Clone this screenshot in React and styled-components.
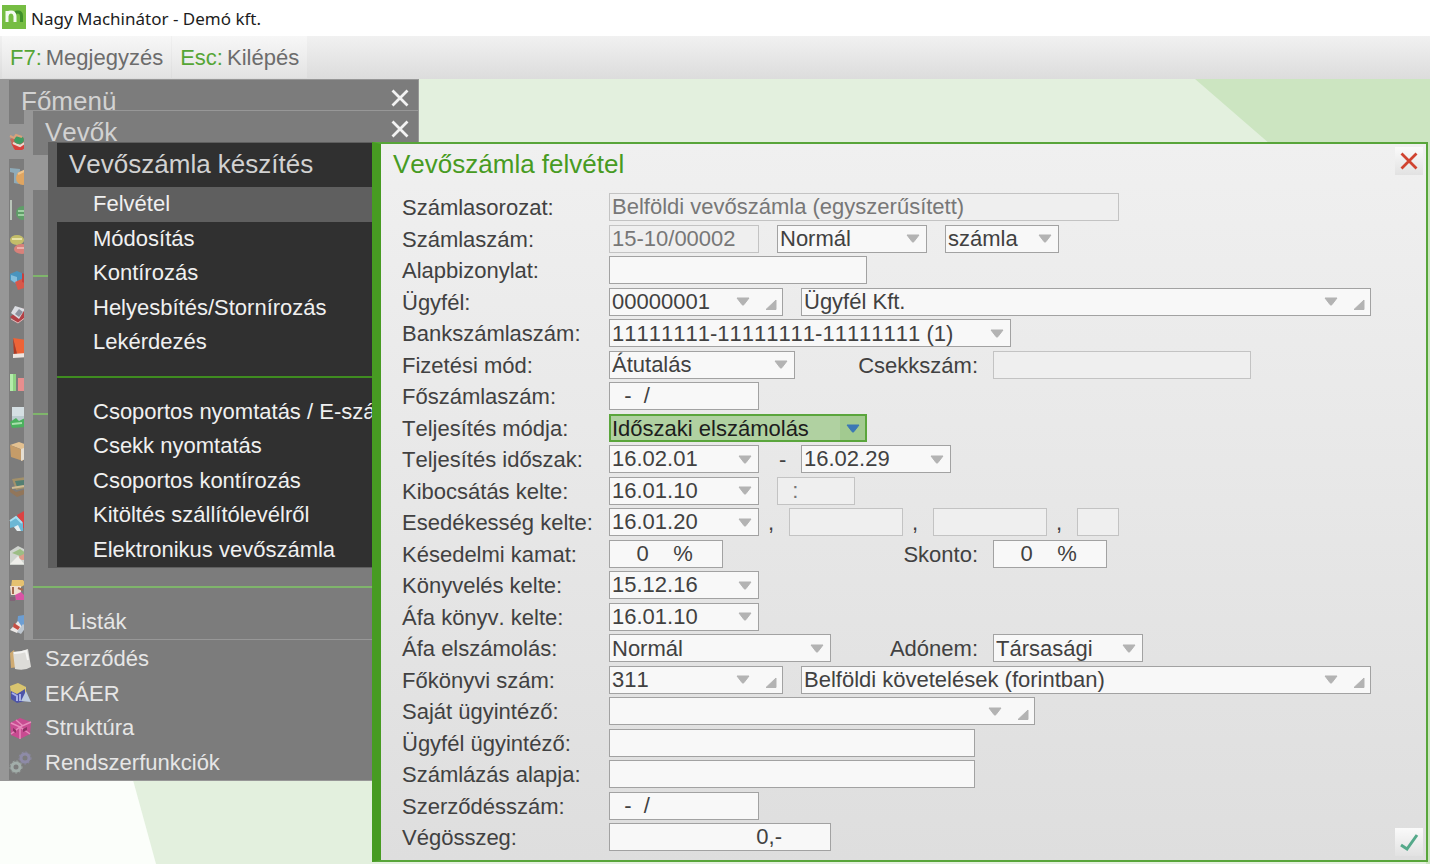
import { useId } from "react";
import styled, { createGlobalStyle, css } from "styled-components";

const GlobalStyle = createGlobalStyle`
  * {
    box-sizing: border-box;
  }

  body {
    margin: 0;
    background-color: #e3f0de;
    font-family: "Liberation Sans", Arial, sans-serif;
    font-size: 22px;
    font-kerning: none;
    color: #414141;
  }

  button, input, select {
    font: inherit;
    font-kerning: none;
    color: inherit;
    border-radius: 0;
  }
`;

const Screen = styled.div`
  min-height: 100vh;
  display: flex;
  flex-direction: column;
  overflow: hidden;
`;

const TitleBar = styled.header`
  display: flex;
  align-items: center;
  gap: 5px;
  height: 36px;
  padding-left: 2px;
  background-color: white;
  color: #1c1c1c;
  font-family: "Noto Sans", "Open Sans", sans-serif;
  font-size: 17px;

  svg {
    margin-bottom: 2px;
  }
`;

const Toolbar = styled.nav`
  display: flex;
  gap: 1px;
  height: 43px;
  padding: 0 2px 0 2px;
  background: linear-gradient(#f1f1f1, #dcdcdc);
`;

const ToolButton = styled.button`
  border: 0;
  height: 42px;
  padding: 2px 8px 0 8px;
  background: linear-gradient(#f7f7f7, #e3e3e3);
  color: #6c6c6c;
  display: flex;
  align-items: center;
  gap: 4px;

  span {
    color: #55a535;
  }
`;

const Desktop = styled.main`
  flex: 1;
  display: flex;
  position: relative;
`;

const Wallpaper = styled.svg`
  position: absolute;
  width: 100%;
  height: 100%;
`;

/* cascading menu windows, each one lies over the one before it */
const MenuWindow = styled.section`
  position: absolute;
  top: ${(props) => props.$top}px;
  left: ${(props) => props.$left}px;
  width: ${(props) => props.$width}px;
  border-style: solid;
  border-width: 1px 1px 1px 9px;
  border-color: ${(props) => (props.$dark ? "#5f5f5f" : "#979797")};
  background-color: ${(props) => (props.$dark ? "#303030" : "#7c7c7c")};
  color: ${(props) => (props.$dark ? "#f0f0f0" : "#e6e6e6")};
`;

const MenuHeader = styled.div`
  height: 44px;
  padding: 0 8px 0 12px;
  display: flex;
  justify-content: space-between;

  h2 {
    margin: 0;
    font-size: 26px;
    font-weight: 400;
    line-height: 42px;
    color: #d2d2d2;
  }
`;

const MenuClose = styled.button`
  border: 0;
  padding: 0;
  width: 20px;
  height: 36px;
  background: none;
  display: flex;
  align-items: center;
  justify-content: center;
`;

const MenuList = styled.ul`
  list-style: none;
  margin: 0;
  padding: 0;
  height: ${(props) => props.$height}px;
  display: grid;
  grid-auto-rows: 1fr;
`;

const MenuItem = styled.li`
  display: flex;
  align-items: center;

  ${(props) =>
    props.$active &&
    css`
      background-color: ${props.$dark ? "#5f5f5f" : "#979797"};
    `}
`;

const MenuLink = styled.a`
  flex: 1;
  display: flex;
  align-items: center;
  padding-left: ${(props) => props.$indent}px;
  color: inherit;
  text-decoration: none;
  white-space: nowrap;

  svg {
    width: 23px;
    height: 23px;
    margin-right: 13px;
  }
`;

const Divider = styled.hr`
  flex: 1;
  margin: 0;
  border: 0;
  height: 2px;
  background-color: ${(props) => (props.$dark ? "#3f8c20" : "#7fb56b")};
`;

const Dialog = styled.section`
  position: relative;
  flex: 1;
  margin: 63px 2px 2px 372px;
  display: flex;
  flex-direction: column;
  border: 2px solid #58a53a;
  border-left: 9px solid #479b22;
  background: linear-gradient(#f0f0f0, #dedede);
`;

const DialogHeader = styled.div`
  height: 49px;
  padding: 3px 3px 0 12px;
  display: flex;
  justify-content: space-between;
  align-items: flex-start;

  h1 {
    margin: 0;
    font-size: 26px;
    font-weight: 400;
    line-height: 34px;
    color: #479b22;
  }
`;

const DialogBody = styled.form`
  flex: 1;
  display: flex;
  align-items: stretch;
  padding: 0 3px 4px 21px;
`;

const Rows = styled.div`
  flex: 1;
  display: flex;
  flex-direction: column;
  justify-content: space-between;
  gap: 3px;
  padding-bottom: 5px;
`;

const Row = styled.div`
  display: flex;
  align-items: center;
  height: 28px;
`;

const Label = styled.label`
  width: 207px;
  padding-top: 2px;
  white-space: nowrap;
`;

const SideLabel = styled.label`
  width: ${(props) => props.$width}px;
  padding: 2px 15px 0 0;
  text-align: right;
`;

const Gap = styled.span`
  width: 18px;
`;

const Comma = styled.span`
  width: 30px;
  padding: 2px 0 0 9px;
`;

const Dash = styled.span`
  width: 42px;
  padding: 2px 0 0 20px;
`;

const SquareButton = styled.button`
  width: 28px;
  height: 28px;
  padding: 0;
  border: 0;
  display: flex;
  align-items: center;
  justify-content: center;
  background: linear-gradient(#fafafa, #e2e2e2);
  align-self: ${(props) => (props.$bottom ? "flex-end" : "flex-start")};
`;

const Box = styled.span`
  display: grid;
  grid-template-columns: 1fr auto;
  width: ${(props) => props.$width}px;
  height: 28px;
  border: 1px solid #a2a2a2;
  background-color: #f8f8f8;

  ${(props) =>
    props.$disabled &&
    css`
      border-color: #c3c3c3;
      background-color: #efefef;
      color: #777777;
    `}

  ${(props) =>
    props.$focused &&
    css`
      border: 2px solid #5aa53c;
      background: linear-gradient(to left, #a2ca90 25px, #b0d1a1 25px);
      color: #1d1d1d;
    `}
`;

const control = css`
  grid-row: 1;
  grid-column: 1 / 3;
  min-width: 0;
  width: 100%;
  border: 0;
  outline: 0;
  background: none;
  appearance: none;
`;

const Input = styled.input`
  ${control}
  padding: 0 ${(props) => props.$padEnd || 2}px 0 2px;
  text-align: ${(props) => (props.$padEnd ? "right" : "left")};
`;

const Select = styled.select`
  ${control}
  padding: 0 ${(props) => (props.$focused ? 1 : 2)}px;
  opacity: 1;
`;

const Marks = styled.span`
  grid-row: 1;
  grid-column: 2;
  display: flex;
  align-items: center;
  padding-right: ${(props) => (props.$tight ? 5 : 6)}px;
  pointer-events: none;
`;

const Corner = styled.svg`
  margin: 6px 0 0 15px;
`;

const Arrow = ({ color = "#b3b3b3" }) => (
  <svg width="14" height="9" viewBox="0 0 14 9">
    <path
      d="M1 1h12L7.900 7.700q-.9.900-1.800 0z"
      fill={color}
      stroke={color}
      strokeLinejoin="round"
    />
  </svg>
);

const Cross = ({ color, size }) => (
  <svg width={size} height={size} viewBox="0 0 18 18">
    <path d="M1.500 1.500l15 15M16.500 1.500l-15 15" stroke={color} strokeWidth="2.800" />
  </svg>
);

const TextField = ({ width, value = "", disabled, padEnd, id, label }) => (
  <Box $width={width} $disabled={disabled}>
    <Input
      id={id}
      aria-label={label}
      defaultValue={value}
      disabled={disabled}
      $padEnd={padEnd}
    />
  </Box>
);

const PickField = ({ width, value = "", corner, id, label }) => (
  <Box $width={width}>
    <Input id={id} aria-label={label} defaultValue={value} />
    <Marks $tight={corner}>
      <Arrow />
      {corner && (
        <Corner width="12" height="11" viewBox="0 0 12 11">
          <path d="M1 10.500L11 1v9.500z" fill="#b3b3b3" stroke="#b3b3b3" strokeLinejoin="round" />
        </Corner>
      )}
    </Marks>
  </Box>
);

const SelectField = ({ width, value, focused, id, label }) => (
  <Box $width={width} $focused={focused}>
    <Select id={id} aria-label={label} $focused={focused}>
      <option>{value}</option>
    </Select>
    <Marks $tight={focused}>
      <Arrow color={focused ? "#3b78b5" : undefined} />
    </Marks>
  </Box>
);

const FormRow = ({ label, children }) => {
  const id = useId();
  return (
    <Row>
      <Label htmlFor={id}>{label}</Label>
      {children(id)}
    </Row>
  );
};

const icons = [
  <>
    <path d="M1 9l9-3 12 5-8 8H5z" fill="#c26a5c" />
    <path d="M2 13l8 4 12-7v4l-9 6H6z" fill="#d8403c" />
    <path d="M4 13l7 3 9-6" stroke="#eadbd3" strokeWidth="2" fill="none" />
    <ellipse cx="10" cy="10" rx="5" ry="4" fill="#3f9c63" />
    <path d="M1 6l4 2 2-3 6 2" stroke="#d9a27c" strokeWidth="2" fill="none" />
  </>,
  <>
    <path d="M1 4l10 1-1 15-5-1V9L1 8z" fill="#8eabb9" />
    <circle cx="14" cy="14" r="7" fill="#dfa561" />
    <path d="M9 10l6-3 5 3" stroke="#f0c48a" strokeWidth="2" fill="none" />
  </>,
  <>
    <path d="M2 1v20" stroke="#b9c4b9" strokeWidth="2" />
    <circle cx="14" cy="14" r="7" fill="#5f9e68" />
    <path d="M9 12h9M9 16h9" stroke="#9ed0a2" strokeWidth="2" />
  </>,
  <>
    <ellipse cx="8" cy="7" rx="7" ry="5" fill="#c3bd69" />
    <path d="M3 6h10" stroke="#e8e2a5" strokeWidth="2" />
    <ellipse cx="13" cy="16" rx="8" ry="5" fill="#d8817a" />
    <path d="M8 15h10" stroke="#edb0aa" strokeWidth="2" />
  </>,
  <>
    <path d="M1 6l7-3 7 3v8l-8 2-6-4z" fill="#4a94bd" />
    <path d="M2 7l6 2v7l-6-4z" fill="#85bedb" />
    <path d="M6 14l9-4v10l-6 2z" fill="#d8584a" />
    <path d="M13 5l8 3v9l-8-3z" fill="#c83f3b" />
  </>,
  <>
    <path d="M1 15l12-9 9 5-13 10z" fill="#b34045" />
    <path d="M2 11l4-7 10 3-6 10z" fill="#dbdde2" />
    <path d="M6 12l4-5 4 3-4 5z" fill="#8d929e" />
    <path d="M2 17l7 4 12-9" stroke="#e7b4b6" fill="none" />
  </>,
  <>
    <path d="M4 1l14 2v14H8z" fill="#ee6337" />
    <path d="M4 1l4 16-3 1z" fill="#b23921" />
    <path d="M4 17l13-1 3 4-16 1z" fill="#eee6e2" />
  </>,
  <>
    <path d="M1 3h6v17H1z" fill="#8ed283" />
    <path d="M1 3h3v17H1z" fill="#b3ecaa" />
    <path d="M9 7h6v13H9z" fill="#e78e8e" />
    <path d="M18 4h4v16h-4z" fill="#83b7df" />
  </>,
  <>
    <path d="M3 1h16v20H3z" fill="#bccbd0" />
    <path d="M3 1h16v9H3z" fill="#d5dfe3" />
    <path d="M1 16l6-4 3 3 6-3v9l-13 1z" fill="#4bb15e" />
    <path d="M3 18l10-1" stroke="#a8e0ac" strokeWidth="2" />
  </>,
  <>
    <path d="M1 5l9-3 11 4-7 4z" fill="#e3c191" />
    <path d="M1 5l13 5v11L2 17z" fill="#c59c69" />
    <path d="M12 9l9-3v11l-9 4z" fill="#e5ded2" />
  </>,
  <>
    <path d="M3 4l14-2 4 10-14 3z" fill="#a3916a" />
    <path d="M6 6l9-1 2 5-9 2z" fill="#547f73" />
    <path d="M1 13l6 4 14-4v4l-13 5-7-5z" fill="#92765a" />
    <path d="M3 13l12-2" stroke="#d0bc93" strokeWidth="2" />
  </>,
  <>
    <path d="M8 5l7-4 7 5v10l-8 2z" fill="#db4343" />
    <path d="M1 11l6-5 7 7v8H9l-4-4-4 1z" fill="#6bb7d5" />
    <path d="M5 17l4-2 3 6H8z" fill="#e7eff2" />
    <path d="M1 11l6-4 6 6" stroke="#aadef0" strokeWidth="2" fill="none" />
  </>,
  <>
    <path d="M1 7l8-5 12 6v13H1z" fill="#cfd3ce" />
    <path d="M1 20l8-8 6 8z" fill="#eeeeea" />
    <circle cx="14" cy="12" r="4" fill="#dd9b8a" />
    <path d="M3 9l8-4 6 4-6 3z" fill="#9cbd84" />
  </>,
  <>
    <path d="M3 1h11l3 4-5 3H2z" fill="#e5c170" />
    <path d="M1 7h11v9H2z" fill="#f0dfd0" />
    <path d="M4 8v7M9 9l5 2" stroke="#a5694f" strokeWidth="2" fill="none" />
    <path d="M6 16l6-3 8 8H7z" fill="#d954a5" />
    <path d="M1 18h5v4H1z" fill="#816477" />
  </>,
  <>
    <path d="M9 3l6-1 6 6-6 9-7-4z" fill="#6c9ed3" />
    <path d="M1 17l8-9 4 6-5 6z" fill="#ebe8e6" />
    <path d="M5 10l6 4-2 3-5-3z" fill="#c64e43" />
    <path d="M8 19l6-8 3 3-5 7z" fill="#bec7d0" />
  </>,
  <>
    <path d="M1 5l4-3 4 17-7 1z" fill="#cfab72" />
    <path d="M4 4q8 0 15-3l3 18q-6 4-16 2z" fill="#dddcd8" />
    <path d="M5 5q6 0 12-2l2 9" stroke="#f5f5f3" strokeWidth="2" fill="none" />
  </>,
  <>
    <path d="M1 4l8-3 8 4v6l-9 3-6-3z" fill="#d9c56f" />
    <path d="M2 9l6 3 8-5v12l-8 2-6-4z" fill="#4d54a8" />
    <path d="M3 11l5 3v5M11 12v7" stroke="#a8afe8" strokeWidth="2" fill="none" />
    <path d="M12 19l5-10 5 11z" fill="#bdcbdf" />
  </>,
  <>
    <path d="M1 6l10-5 11 4-1 12-10 5-9-4z" fill="#c84b91" />
    <path
      d="M2 6l9 4 11-5M11 10v12M2 17l9-7 10 7M7 3l7 6"
      stroke="#e78bbc"
      strokeWidth="1.500"
      fill="none"
    />
    <path d="M4 11l3 2v3l-3-2zM14 12l4-2v3l-4 2z" fill="#8b3265" />
  </>,
  <>
    <circle cx="16" cy="7" r="4" fill="none" stroke="#8e8ba7" strokeWidth="3" />
    <circle cx="16" cy="7" r="6" fill="none" stroke="#8e8ba7" strokeDasharray="2 2" />
    <circle cx="7" cy="16" r="4" fill="none" stroke="#a2aeaa" strokeWidth="3" />
    <circle cx="7" cy="16" r="6" fill="none" stroke="#a2aeaa" strokeDasharray="2 2" />
  </>,
];

const mainLabels = {
  15: "Szerződés",
  16: "EKÁER",
  17: "Struktúra",
  18: "Rendszerfunkciók",
};

/* "-" is a divider line */
const customerItems = ["", "", "", "-", "", "", "", "-", "", "", "", "", "-", "Listák"];

const invoiceItems = [
  "Felvétel",
  "Módosítás",
  "Kontírozás",
  "Helyesbítés/Stornírozás",
  "Lekérdezés",
  "-",
  "Csoportos nyomtatás / E-számla",
  "Csekk nyomtatás",
  "Csoportos kontírozás",
  "Kitöltés szállítólevélről",
  "Elektronikus vevőszámla",
];

const Menu = ({ title, items, top, left, width, height, indent, dark, closable }) => (
  <MenuWindow $top={top} $left={left} $width={width} $dark={dark}>
    <MenuHeader>
      <h2>{title}</h2>
      {closable && (
        <MenuClose aria-label="Bezárás">
          <Cross color="#f2f2f2" size={18} />
        </MenuClose>
      )}
    </MenuHeader>
    <MenuList $height={height}>
      {items.map((item, i) => (
        <MenuItem key={i} $active={i === 0} $dark={dark}>
          {item === "-" ? (
            <Divider $dark={dark} />
          ) : (
            item && (
              <MenuLink href="#" $indent={indent}>
                {item}
              </MenuLink>
            )
          )}
        </MenuItem>
      ))}
    </MenuList>
  </MenuWindow>
);

const InvoiceForm = () => (
  <Rows>
    <FormRow label="Számlasorozat:">
      {(id) => (
        <TextField id={id} width={510} value="Belföldi vevőszámla (egyszerűsített)" disabled />
      )}
    </FormRow>
    <FormRow label="Számlaszám:">
      {(id) => (
        <>
          <TextField id={id} width={150} value="15-10/00002" disabled />
          <Gap />
          <SelectField label="Számla típusa" width={150} value="Normál" />
          <Gap />
          <SelectField label="Bizonylat" width={114} value="számla" />
        </>
      )}
    </FormRow>
    <FormRow label="Alapbizonylat:">{(id) => <TextField id={id} width={258} />}</FormRow>
    <FormRow label="Ügyfél:">
      {(id) => (
        <>
          <PickField id={id} width={174} value="00000001" corner />
          <Gap />
          <PickField label="Ügyfél neve" width={570} value="Ügyfél Kft." corner />
        </>
      )}
    </FormRow>
    <FormRow label="Bankszámlaszám:">
      {(id) => <SelectField id={id} width={402} value="11111111-11111111-11111111 (1)" />}
    </FormRow>
    <FormRow label="Fizetési mód:">
      {(id) => (
        <>
          <SelectField id={id} width={186} value="Átutalás" />
          <SideLabel htmlFor="cheque" $width={198}>
            Csekkszám:
          </SideLabel>
          <TextField id="cheque" width={258} disabled />
        </>
      )}
    </FormRow>
    <FormRow label="Főszámlaszám:">
      {(id) => <TextField id={id} width={150} value="  -  /" />}
    </FormRow>
    <FormRow label="Teljesítés módja:">
      {(id) => <SelectField id={id} width={258} value="Időszaki elszámolás" focused />}
    </FormRow>
    <FormRow label="Teljesítés időszak:">
      {(id) => (
        <>
          <PickField id={id} width={150} value="16.02.01" />
          <Dash>-</Dash>
          <PickField label="Időszak vége" width={150} value="16.02.29" />
        </>
      )}
    </FormRow>
    <FormRow label="Kibocsátás kelte:">
      {(id) => (
        <>
          <PickField id={id} width={150} value="16.01.10" />
          <Gap />
          <TextField label="Időpont" width={78} value="  :" disabled />
        </>
      )}
    </FormRow>
    <FormRow label="Esedékesség kelte:">
      {(id) => (
        <>
          <PickField id={id} width={150} value="16.01.20" />
          <Comma>,</Comma>
          <TextField label="Második esedékesség" width={114} disabled />
          <Comma>,</Comma>
          <TextField label="Harmadik esedékesség" width={114} disabled />
          <Comma>,</Comma>
          <TextField label="Napok" width={42} disabled />
        </>
      )}
    </FormRow>
    <FormRow label="Késedelmi kamat:">
      {(id) => (
        <>
          <TextField id={id} width={114} value="    0    %" />
          <SideLabel htmlFor="discount" $width={270}>
            Skonto:
          </SideLabel>
          <TextField id="discount" width={114} value="    0    %" />
        </>
      )}
    </FormRow>
    <FormRow label="Könyvelés kelte:">
      {(id) => <PickField id={id} width={150} value="15.12.16" />}
    </FormRow>
    <FormRow label="Áfa könyv. kelte:">
      {(id) => <PickField id={id} width={150} value="16.01.10" />}
    </FormRow>
    <FormRow label="Áfa elszámolás:">
      {(id) => (
        <>
          <SelectField id={id} width={222} value="Normál" />
          <SideLabel htmlFor="tax" $width={162}>
            Adónem:
          </SideLabel>
          <SelectField id="tax" width={150} value="Társasági" />
        </>
      )}
    </FormRow>
    <FormRow label="Főkönyvi szám:">
      {(id) => (
        <>
          <PickField id={id} width={174} value="311" corner />
          <Gap />
          <PickField
            label="Főkönyvi szám neve"
            width={570}
            value="Belföldi követelések (forintban)"
            corner
          />
        </>
      )}
    </FormRow>
    <FormRow label="Saját ügyintéző:">
      {(id) => <PickField id={id} width={426} corner />}
    </FormRow>
    <FormRow label="Ügyfél ügyintéző:">{(id) => <TextField id={id} width={366} />}</FormRow>
    <FormRow label="Számlázás alapja:">{(id) => <TextField id={id} width={366} />}</FormRow>
    <FormRow label="Szerződésszám:">
      {(id) => <TextField id={id} width={150} value="  -  /" />}
    </FormRow>
    <FormRow label="Végösszeg:">
      {(id) => <TextField id={id} width={222} value="0,-" padEnd={48} />}
    </FormRow>
  </Rows>
);

export default function App() {
  return (
    <Screen>
      <GlobalStyle />

      <TitleBar>
        <svg width="24" height="24" viewBox="0 0 24 24">
          <path d="M0 0h24v24H0z" fill="#76bd43" />
          <path
            d="M13 8q1-1 3-1 3.500 0 3.500 4v6"
            stroke="#3f8f2a"
            strokeWidth="3"
            fill="none"
          />
          <path
            d="M5 17V6M5 11q.5-4 4-4t4 4v6"
            stroke="#f4faf0"
            strokeWidth="3"
            fill="none"
          />
        </svg>
        Nagy Machinátor - Demó kft.
      </TitleBar>

      <Toolbar>
        <ToolButton>
          <span>F7:</span>Megjegyzés
        </ToolButton>
        <ToolButton>
          <span>Esc:</span>Kilépés
        </ToolButton>
      </Toolbar>

      <Desktop>
        <Wallpaper viewBox="0 0 1430 785" preserveAspectRatio="none">
          <path d="M0 0h1430v785H0z" fill="#e3f0de" />
          <path d="M1195 0h235v785h-4V200z" fill="#cce5c1" />
          <path d="M0 600h82l51 101 23 84H0z" fill="#fbfefa" />
        </Wallpaper>

        <MenuWindow $top={0} $left={0} $width={419}>
          <MenuHeader>
            <h2>Főmenü</h2>
            <MenuClose aria-label="Bezárás">
              <Cross color="#f2f2f2" size={18} />
            </MenuClose>
          </MenuHeader>
          <MenuList $height={656}>
            {icons.map((icon, i) => (
              <MenuItem key={i} $active={i === 0}>
                <MenuLink href="#" $indent={0}>
                  <svg viewBox="0 0 23 23">{icon}</svg>
                  {mainLabels[i]}
                </MenuLink>
              </MenuItem>
            ))}
          </MenuList>
        </MenuWindow>

        <Menu
          title="Vevők"
          items={customerItems}
          top={31}
          left={24}
          width={395}
          height={484}
          indent={36}
          closable
        />
        <Menu
          title="Vevőszámla készítés"
          items={invoiceItems}
          top={63}
          left={48}
          width={371}
          height={380}
          indent={36}
          dark
        />

        <Dialog>
          <DialogHeader>
            <h1>Vevőszámla felvétel</h1>
            <SquareButton aria-label="Bezárás">
              <Cross color="#d0432f" size={18} />
            </SquareButton>
          </DialogHeader>
          <DialogBody>
            <InvoiceForm />
            <SquareButton type="button" aria-label="Rendben" $bottom>
              <svg width="20" height="20" viewBox="0 0 20 20">
                <path d="M2 13l6 4L18 3" fill="none" stroke="#55a98a" strokeWidth="3" />
              </svg>
            </SquareButton>
          </DialogBody>
        </Dialog>
      </Desktop>
    </Screen>
  );
}
